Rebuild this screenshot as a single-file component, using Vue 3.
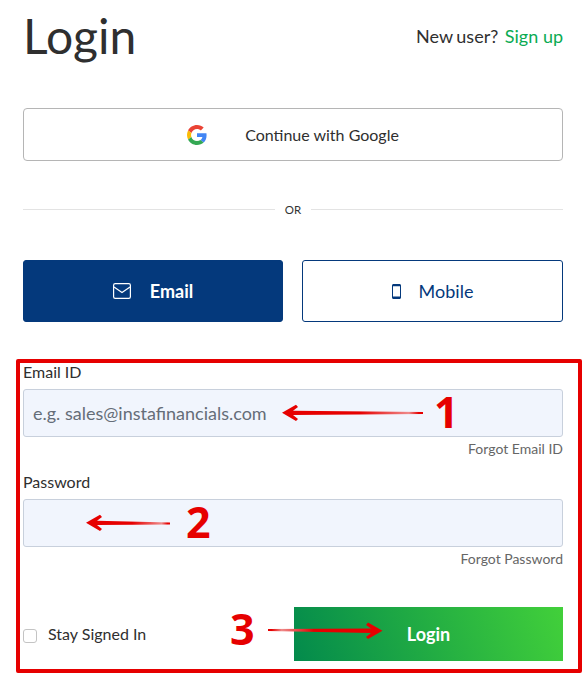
<template>
  <main class="login">
    <header class="login__head">
      <h1 class="login__title">Login</h1>
      <p class="login__signup">New user? <a href="#">Sign up</a></p>
    </header>

    <button class="google" type="button">
      <svg class="google__icon" viewBox="0 0 48 48" width="20" height="20">
        <path fill="#EA4335" d="M24 9.5c3.54 0 6.71 1.22 9.21 3.6l6.85-6.85C35.9 2.38 30.47 0 24 0 14.62 0 6.51 5.38 2.56 13.22l7.98 6.19C12.43 13.72 17.74 9.5 24 9.5z" />
        <path fill="#4285F4" d="M46.98 24.55c0-1.57-.15-3.09-.38-4.55H24v9.02h12.94c-.58 2.96-2.26 5.48-4.78 7.18l7.73 6c4.51-4.18 7.09-10.36 7.09-17.65z" />
        <path fill="#FBBC05" d="M10.53 28.59c-.48-1.45-.76-2.99-.76-4.59s.27-3.14.76-4.59l-7.98-6.19C.92 16.46 0 20.12 0 24c0 3.88.92 7.54 2.56 10.78l7.97-6.19z" />
        <path fill="#34A853" d="M24 48c6.48 0 11.93-2.13 15.89-5.81l-7.73-6c-2.15 1.45-4.92 2.3-8.16 2.3-6.26 0-11.57-4.22-13.47-9.91l-7.98 6.19C6.51 42.62 14.62 48 24 48z" />
      </svg>
      <span>Continue with Google</span>
    </button>

    <div class="divider"><span>OR</span></div>

    <div class="tabs">
      <button class="tab tab--active" type="button">
        <svg viewBox="0 0 18 16" width="18" height="16" fill="none" stroke="currentColor" stroke-width="1.2">
          <rect x="0.6" y="0.6" width="16.8" height="14.8" rx="1.6" />
          <path d="M1 4l8 5.5L17 4" />
        </svg>
        <span>Email</span>
      </button>
      <button class="tab tab--mobile" type="button">
        <svg viewBox="0 0 9 15" width="9" height="15">
          <path fill="currentColor" fill-rule="evenodd" d="M1.5 0h6C8.300 0 9 .7 9 1.500v12C9 14.300 8.300 15 7.500 15h-6C.7 15 0 14.300 0 13.500v-12C0 .7.700 0 1.500 0zM1 2.200v10.200h7V2.200z" />
        </svg>
        <span>Mobile</span>
      </button>
    </div>

    <form class="form" @submit.prevent>
      <label class="field__label">Email ID</label>
      <input class="field__input" type="text" placeholder="e.g. sales@instafinancials.com" />
      <a class="field__forgot" href="#">Forgot Email ID</a>

      <label class="field__label field__label--second">Password</label>
      <input class="field__input" type="password" />
      <a class="field__forgot" href="#">Forgot Password</a>

      <div class="form__foot">
        <label class="stay">
          <span class="stay__box"></span>
          <span>Stay Signed In</span>
        </label>
        <button class="submit" type="submit">Login</button>
      </div>
    </form>

    <!-- red annotations on top of the form -->
    <div class="mark"></div>
    <svg class="arrows" width="586" height="678" viewBox="0 0 586 678">
      <defs>
        <linearGradient id="fade-left" x1="0" x2="1" y1="0" y2="0">
          <stop offset="0" stop-color="#e60000" />
          <stop offset="0.55" stop-color="#e60000" />
          <stop offset="0.9" stop-color="#ef8a8a" />
          <stop offset="0.97" stop-color="#e60000" />
        </linearGradient>
        <linearGradient id="fade-right" x1="0" x2="1" y1="0" y2="0">
          <stop offset="0.03" stop-color="#e60000" />
          <stop offset="0.12" stop-color="#ef8a8a" />
          <stop offset="0.4" stop-color="#e60000" />
          <stop offset="1" stop-color="#e60000" />
        </linearGradient>
      </defs>
      <path v-for="a in leftArrows" :key="a" :d="a" fill="url(#fade-left)" />
      <path :d="rightArrow" fill="url(#fade-right)" />
    </svg>
    <span class="num num--1">1</span>
    <span class="num num--2">2</span>
    <span class="num num--3">3</span>
  </main>
</template>

<script setup>
const leftArrows = [
  'M282 412.700L296 404.700L298 407L293 410.700L423 412V414L293 415L298 419L296 421Z',
  'M86 522.700L100 514.700L102 517L97 520.700L170 522.500V524.500L97 525L102 529L100 531Z',
]
const rightArrow = 'M382.500 630.700L368 622.500L366 625L371 628.500L268 629V631L371 633L366 637L368 639Z'
</script>

<style>
html,
body {
  background: #fff;
}
</style>

<style scoped>
.login {
  position: relative;
  box-sizing: border-box;
  width: 586px;
  height: 678px;
  padding: 0 23px;
  overflow: hidden;
  font-family: Lato, "Liberation Sans", sans-serif;
  color: #2f2f2f;
}

.login__head {
  display: flex;
  justify-content: space-between;
  align-items: flex-start;
  height: 108px;
}

.login__title {
  margin: 6px 0 0;
  font-size: 48px;
  line-height: 60px;
  font-weight: 400;
}

.login__signup {
  margin: 25px 0 0;
  font-size: 18px;
  line-height: 22px;
  word-spacing: -1px;
}

.login__signup a {
  margin-left: 3px;
  color: #0bab52;
  text-decoration: none;
  word-spacing: 0;
}

.google {
  display: flex;
  align-items: center;
  justify-content: center;
  gap: 38px;
  box-sizing: border-box;
  width: 100%;
  height: 53px;
  padding: 0;
  border: 1px solid #b5b5b5;
  border-radius: 4px;
  background: #fff;
  font: 16px Lato, sans-serif;
  color: #2f2f2f;
}

.divider {
  display: flex;
  align-items: center;
  gap: 10px;
  margin-top: 41px;
  height: 15px;
  font-size: 11.500px;
  color: #333;
}

.divider::before,
.divider::after {
  content: "";
  flex: 1;
  height: 1px;
  background: #e3e3e3;
}

.tabs {
  display: flex;
  gap: 19px;
  margin-top: 43px;
}

.tab {
  display: flex;
  flex: 1;
  align-items: center;
  justify-content: center;
  gap: 19px;
  box-sizing: border-box;
  height: 62px;
  padding: 0;
  border: 1px solid #04397c;
  border-radius: 3px;
  background: #fff;
  font: 18px Lato, sans-serif;
  color: #04397c;
}

.tab--active {
  flex: 0 0 260px;
  background: #04397c;
  color: #fff;
  font-weight: 700;
}

.tab--mobile svg {
  margin-right: -1px;
}

.form {
  display: flex;
  flex-direction: column;
  margin-top: 41px;
}

.field__label {
  font-size: 16px;
  line-height: 18px;
}

.field__label--second {
  margin-top: 16px;
}

.field__input {
  box-sizing: border-box;
  width: 100%;
  height: 48px;
  margin-top: 8px;
  padding: 0 9px;
  border: 1px solid #c8d0dc;
  border-radius: 3px;
  background: #f1f5fd;
  font: 18px Lato, sans-serif;
  outline: none;
}

.field__input::placeholder {
  color: #656d78;
  opacity: 1;
}

.field__forgot {
  align-self: flex-end;
  margin-top: 3px;
  font-size: 14px;
  line-height: 17px;
  color: #666;
  text-decoration: none;
}

.form__foot {
  display: flex;
  justify-content: space-between;
  align-items: center;
  margin-top: 40px;
}

.stay {
  display: flex;
  align-items: center;
  gap: 11px;
  font-size: 16px;
  line-height: 18px;
}

.stay__box {
  box-sizing: border-box;
  width: 14px;
  height: 14px;
  margin-top: 3px;
  border: 1px solid #c4c4c4;
  border-radius: 3px;
  background: #fff;
}

.submit {
  width: 269px;
  height: 54px;
  padding: 0 0 1px;
  border: 0;
  background: linear-gradient(70deg, #038a4c 0%, #42d03a 100%);
  font: 700 18px Lato, sans-serif;
  color: #fff;
}

.mark {
  position: absolute;
  left: 16px;
  top: 359px;
  width: 566px;
  height: 314px;
  box-sizing: border-box;
  border: 4px solid #e60000;
  border-radius: 2px;
  pointer-events: none;
}

.arrows {
  position: absolute;
  left: 0;
  top: 0;
  pointer-events: none;
}

.num {
  position: absolute;
  font-family: "Open Sans", sans-serif;
  font-weight: 700;
  font-size: 43px;
  line-height: 50px;
  color: #e60000;
}

.num--1 {
  left: 434px;
  top: 387px;
}

.num--2 {
  left: 186px;
  top: 497px;
}

.num--3 {
  left: 230px;
  top: 604px;
}
</style>
